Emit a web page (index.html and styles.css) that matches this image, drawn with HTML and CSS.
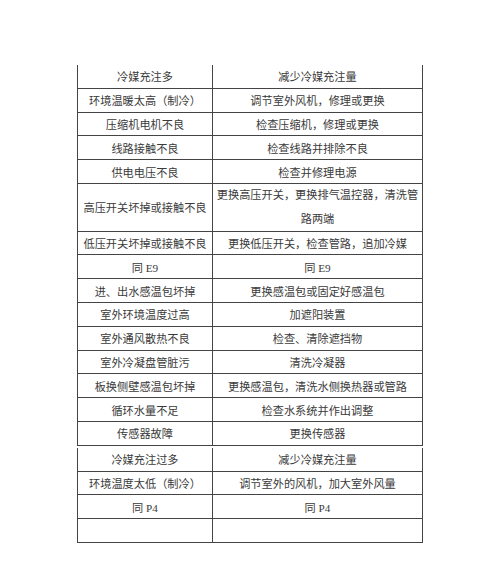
FILE: index.html
```html
<!DOCTYPE html>
<html lang="zh-CN">
<head>
<meta charset="utf-8">
<link rel="stylesheet" href="styles.css">
</head>
<body>
<div class="page">
  <div class="grid upper">
    <div class="cell">冷媒充注多</div><div class="cell">减少冷媒充注量</div>
    <div class="cell">环境温暖太高（制冷）</div><div class="cell">调节室外风机，修理或更换</div>
    <div class="cell">压缩机电机不良</div><div class="cell">检查压缩机，修理或更换</div>
    <div class="cell">线路接触不良</div><div class="cell">检查线路并排除不良</div>
    <div class="cell">供电电压不良</div><div class="cell">检查并修理电源</div>
    <div class="cell tall">高压开关坏掉或接触不良</div><div class="cell tall wrap">更换高压开关，更换排气温控器，清洗管路两端</div>
    <div class="cell">低压开关坏掉或接触不良</div><div class="cell">更换低压开关，检查管路，追加冷媒</div>
    <div class="cell">同 E9</div><div class="cell">同 E9</div>
    <div class="cell">进、出水感温包坏掉</div><div class="cell">更换感温包或固定好感温包</div>
    <div class="cell">室外环境温度过高</div><div class="cell">加遮阳装置</div>
    <div class="cell">室外通风散热不良</div><div class="cell">检查、清除遮挡物</div>
    <div class="cell">室外冷凝盘管脏污</div><div class="cell">清洗冷凝器</div>
    <div class="cell">板换侧壁感温包坏掉</div><div class="cell">更换感温包，清洗水侧换热器或管路</div>
    <div class="cell">循环水量不足</div><div class="cell">检查水系统并作出调整</div>
    <div class="cell">传感器故障</div><div class="cell">更换传感器</div>
  </div>
  <div class="grid lower">
    <div class="cell">冷媒充注过多</div><div class="cell">减少冷媒充注量</div>
    <div class="cell">环境温度太低（制冷）</div><div class="cell">调节室外的风机，加大室外风量</div>
    <div class="cell">同 P4</div><div class="cell">同 P4</div>
    <div class="cell"></div><div class="cell"></div>
  </div>
</div>
</body>
</html>
```
FILE: styles.css
```css
html, body {
  margin: 0;
  padding: 0;
  background: #fff;
}
.page {
  padding: 65px 0 0 77px;
  font-family: "Liberation Serif", "Noto Sans CJK SC", serif;
  font-size: 11.2px;
  color: #3a3a3a;
}
.grid {
  display: grid;
  grid-template-columns: 135px 210px;
  width: 346px;
  border-left: 1px solid #444;
}
.lower {
  margin-top: 2px;
}
.cell {
  box-sizing: border-box;
  height: 23.8px;
  border-right: 1px solid #444;
  border-bottom: 1px solid #444;
  display: flex;
  align-items: center;
  justify-content: center;
  text-align: center;
  white-space: nowrap;
}
.tall {
  height: 47.6px;
}
.wrap {
  white-space: normal;
  line-height: 24px;
  padding: 0 3px;
}
```
